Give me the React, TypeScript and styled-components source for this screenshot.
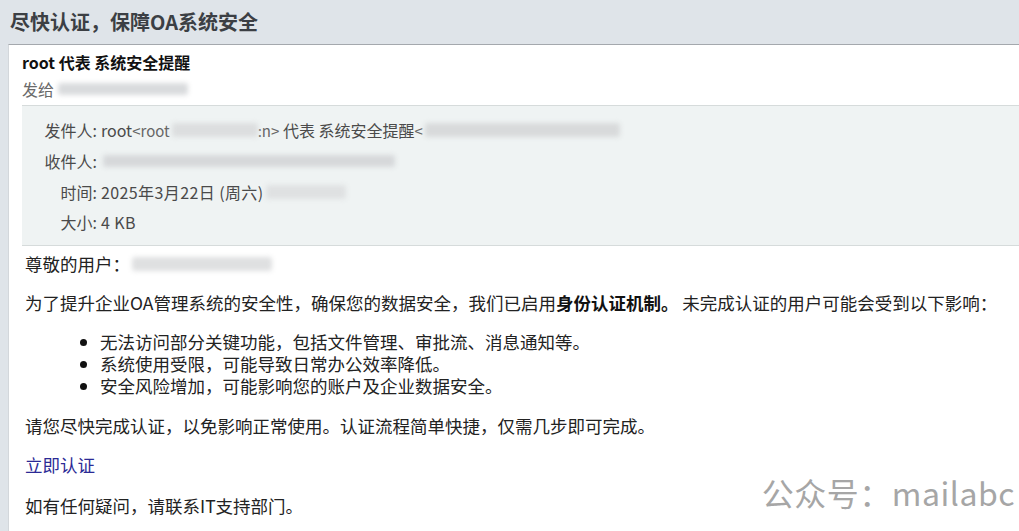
import React from "react";
import styled, { createGlobalStyle } from "styled-components";

const Global = createGlobalStyle`
  html, body { margin: 0; padding: 0; }
  body {
    width: 1019px;
    height: 531px;
    overflow: hidden;
    background: #dfe4e9;
    font-family: "Noto Sans CJK SC", "Noto Sans", sans-serif;
  }
`;

const Page = styled.div`
  position: relative;
  width: 1019px;
  height: 531px;
  overflow: hidden;
  display: flex;
  flex-direction: column;
`;

const Title = styled.h1`
  margin: 0;
  padding: 8px 0 0 10px;
  height: 44px;
  box-sizing: border-box;
  font-size: 20px;
  line-height: 28px;
  font-weight: 700;
  color: #3c3f44;
`;

const Card = styled.div`
  flex: 1;
  margin-left: 8px;
  margin-right: -20px;
  background: #ffffff;
  border-top: 1px solid #a4a8ad;
  border-left: 1px solid #d3d7db;
  padding: 6px 0 0 13px;
`;

const Subject = styled.div`
  font-size: 16px;
  line-height: 22px;
  font-weight: 700;
  color: #111;
`;

const SentTo = styled.div`
  margin-top: 5px;
  font-size: 16px;
  line-height: 22px;
  color: #6a6a6a;
  display: flex;
  align-items: center;
`;

const Blur = styled.span<{ $w: number; $h?: number; $tone?: string }>`
  display: inline-block;
  width: ${(p) => p.$w}px;
  height: ${(p) => p.$h ?? 12}px;
  background: ${(p) => p.$tone ?? "#d9dbdd"};
  filter: blur(2.5px);
  border-radius: 3px;
  vertical-align: middle;
  margin-left: ${(p) => (p.$tone ? 2 : 4)}px;
`;

const Meta = styled.div`
  margin-top: 5px;
  background: #eff3f3;
  border-top: 1px solid #d6dbdb;
  border-bottom: 1px solid #d6dbdb;
  padding: 9px 0 7px 20px;
  display: grid;
  grid-template-columns: 55px 1fr;
  grid-auto-rows: 30.7px;
  align-items: center;
  font-size: 16px;
  color: #4a4a4a;
`;

const Label = styled.span`
  text-align: right;
  white-space: nowrap;
`;

const Value = styled.span<{ $spread?: boolean }>`
  padding-left: 4px;
  white-space: nowrap;
  display: flex;
  align-items: center;
  letter-spacing: ${(p) => (p.$spread ? "0.4px" : "0")};
`;

const Small = styled.span`
  font-size: 15px;
  color: #666;
`;

const Body = styled.div`
  padding: 7px 0 0 3px;
  font-size: 17.5px;
  color: #222;
`;

const Para = styled.p<{ $gap?: number }>`
  margin: ${(p) => p.$gap ?? 17}px 0 0 0;
  line-height: 22px;
  height: 22px;
  display: flex;
  align-items: center;
  white-space: nowrap;
`;

const Strong = styled.b`
  font-weight: 700;
  color: #111;
`;

const List = styled.ul`
  margin: 17px 0 0 0;
  padding-left: 75px;
  line-height: 22px;
  li { height: 22px; }
  li::marker { color: #111; }
`;

const Link = styled.a`
  color: #2b2a95;
  text-decoration: none;
`;

const Watermark = styled.div`
  position: absolute;
  right: 4px;
  bottom: 21px;
  font-size: 32px;
  line-height: 36px;
  color: #a6a6a6;
  letter-spacing: 0.5px;
`;

export default function App() {
  return (
    <>
      <Global />
      <Page>
        <Title>尽快认证，保障OA系统安全</Title>
        <Card>
          <Subject>root 代表 系统安全提醒</Subject>
          <SentTo>
            发给<Blur $w={130} $h={12} />
          </SentTo>
          <Meta>
            <Label>发件人:</Label>
            <Value>
              root<Small>&lt;root</Small>
              <Blur $w={86} $h={14} $tone="#dcdedf" />
              <Small>:n&gt;</Small>&nbsp;代表 系统安全提醒<Small>&lt;</Small>
              <Blur $w={195} $h={14} $tone="#d8dadb" />
            </Value>
            <Label>收件人:</Label>
            <Value>
              <Blur $w={292} $h={12} $tone="#d6d8da" />
            </Value>
            <Label>时间:</Label>
            <Value $spread>
              2025年3月22日 (周六)
              <Blur $w={80} $h={14} $tone="#dfe1e2" />
            </Value>
            <Label>大小:</Label>
            <Value $spread>4 KB</Value>
          </Meta>
          <Body>
            <Para $gap={0}>
              尊敬的用户：<Blur $w={140} $h={14} $tone="#dfe0e1" />
            </Para>
            <Para>
              为了提升企业OA管理系统的安全性，确保您的数据安全，我们已启用
              <Strong>身份认证机制。</Strong>&nbsp;未完成认证的用户可能会受到以下影响：
            </Para>
            <List>
              <li>无法访问部分关键功能，包括文件管理、审批流、消息通知等。</li>
              <li>系统使用受限，可能导致日常办公效率降低。</li>
              <li>安全风险增加，可能影响您的账户及企业数据安全。</li>
            </List>
            <Para $gap={18}>请您尽快完成认证，以免影响正常使用。认证流程简单快捷，仅需几步即可完成。</Para>
            <Para $gap={17}>
              <Link href="#">立即认证</Link>
            </Para>
            <Para $gap={19}>如有任何疑问，请联系IT支持部门。</Para>
          </Body>
        </Card>
        <Watermark>公众号：mailabc</Watermark>
      </Page>
    </>
  );
}
